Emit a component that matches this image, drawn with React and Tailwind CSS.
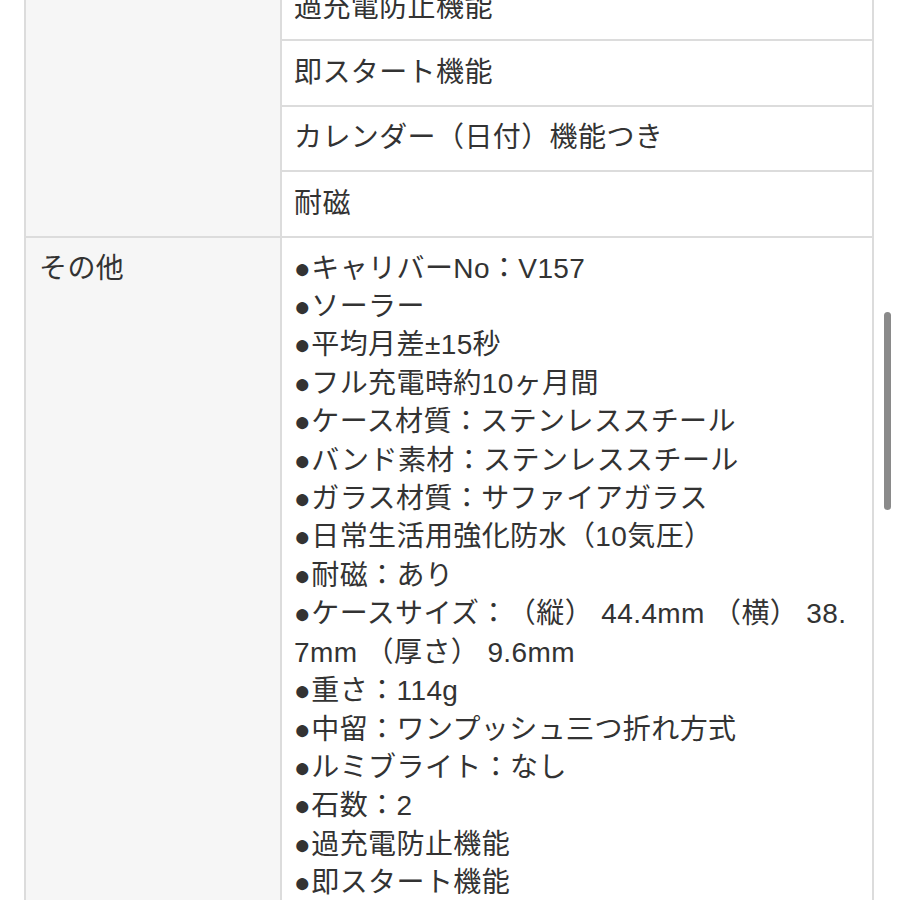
import React from "react";

const features = ["過充電防止機能", "即スタート機能", "カレンダー（日付）機能つき", "耐磁"];

const others = [
  "●キャリバーNo：V157",
  "●ソーラー",
  "●平均月差±15秒",
  "●フル充電時約10ヶ月間",
  "●ケース材質：ステンレススチール",
  "●バンド素材：ステンレススチール",
  "●ガラス材質：サファイアガラス",
  "●日常生活用強化防水（10気圧）",
  "●耐磁：あり",
  "CASE",
  "●重さ：114g",
  "●中留：ワンプッシュ三つ折れ方式",
  "●ルミブライト：なし",
  "●石数：2",
  "●過充電防止機能",
  "●即スタート機能",
  "●カレンダー（日付）機能つき",
];

export default function App() {
  return (
    <div className="relative h-[900px] w-[900px] overflow-hidden bg-white font-['Liberation_Sans','Noto_Sans_CJK_JP',sans-serif] text-[28px] leading-[38.4px] tracking-[0.4px] text-[#333333] [text-spacing-trim:space-all]">
      <div className="-mt-[26px] pl-[24px]">
        <table className="w-[850px] border-collapse table-fixed">
          <colgroup>
            <col className="w-[256px]" />
            <col />
          </colgroup>
          <tbody>
            {features.map((f, i) => (
              <tr key={f}>
                {i === 0 && (
                  <th
                    rowSpan={features.length}
                    className="border-2 border-[#dcdcdc] bg-[#f6f6f6] px-[13px] py-[12.5px] text-left align-top font-normal"
                  ></th>
                )}
                <td className="border-2 border-[#dcdcdc] px-[12px] py-[12.5px] align-top">{f}</td>
              </tr>
            ))}
            <tr>
              <th className="border-2 border-[#dcdcdc] bg-[#f6f6f6] px-[13px] py-[12px] text-left align-top font-normal">
                その他
              </th>
              <td className="border-2 border-[#dcdcdc] px-[12px] py-[12px] align-top">
                {others.map((o) =>
                  o === "CASE" ? (
                    <div key={o}>
                      <div className="whitespace-nowrap">●ケースサイズ：（縦） 44.4mm （横） 38.</div>
                      <div>7mm （厚さ） 9.6mm</div>
                    </div>
                  ) : (
                    <div key={o}>{o}</div>
                  )
                )}
              </td>
            </tr>
          </tbody>
        </table>
      </div>
      <div className="absolute left-[884px] top-[312px] h-[198px] w-[7px] rounded-full bg-[#8a8a8a]" />
    </div>
  );
}
